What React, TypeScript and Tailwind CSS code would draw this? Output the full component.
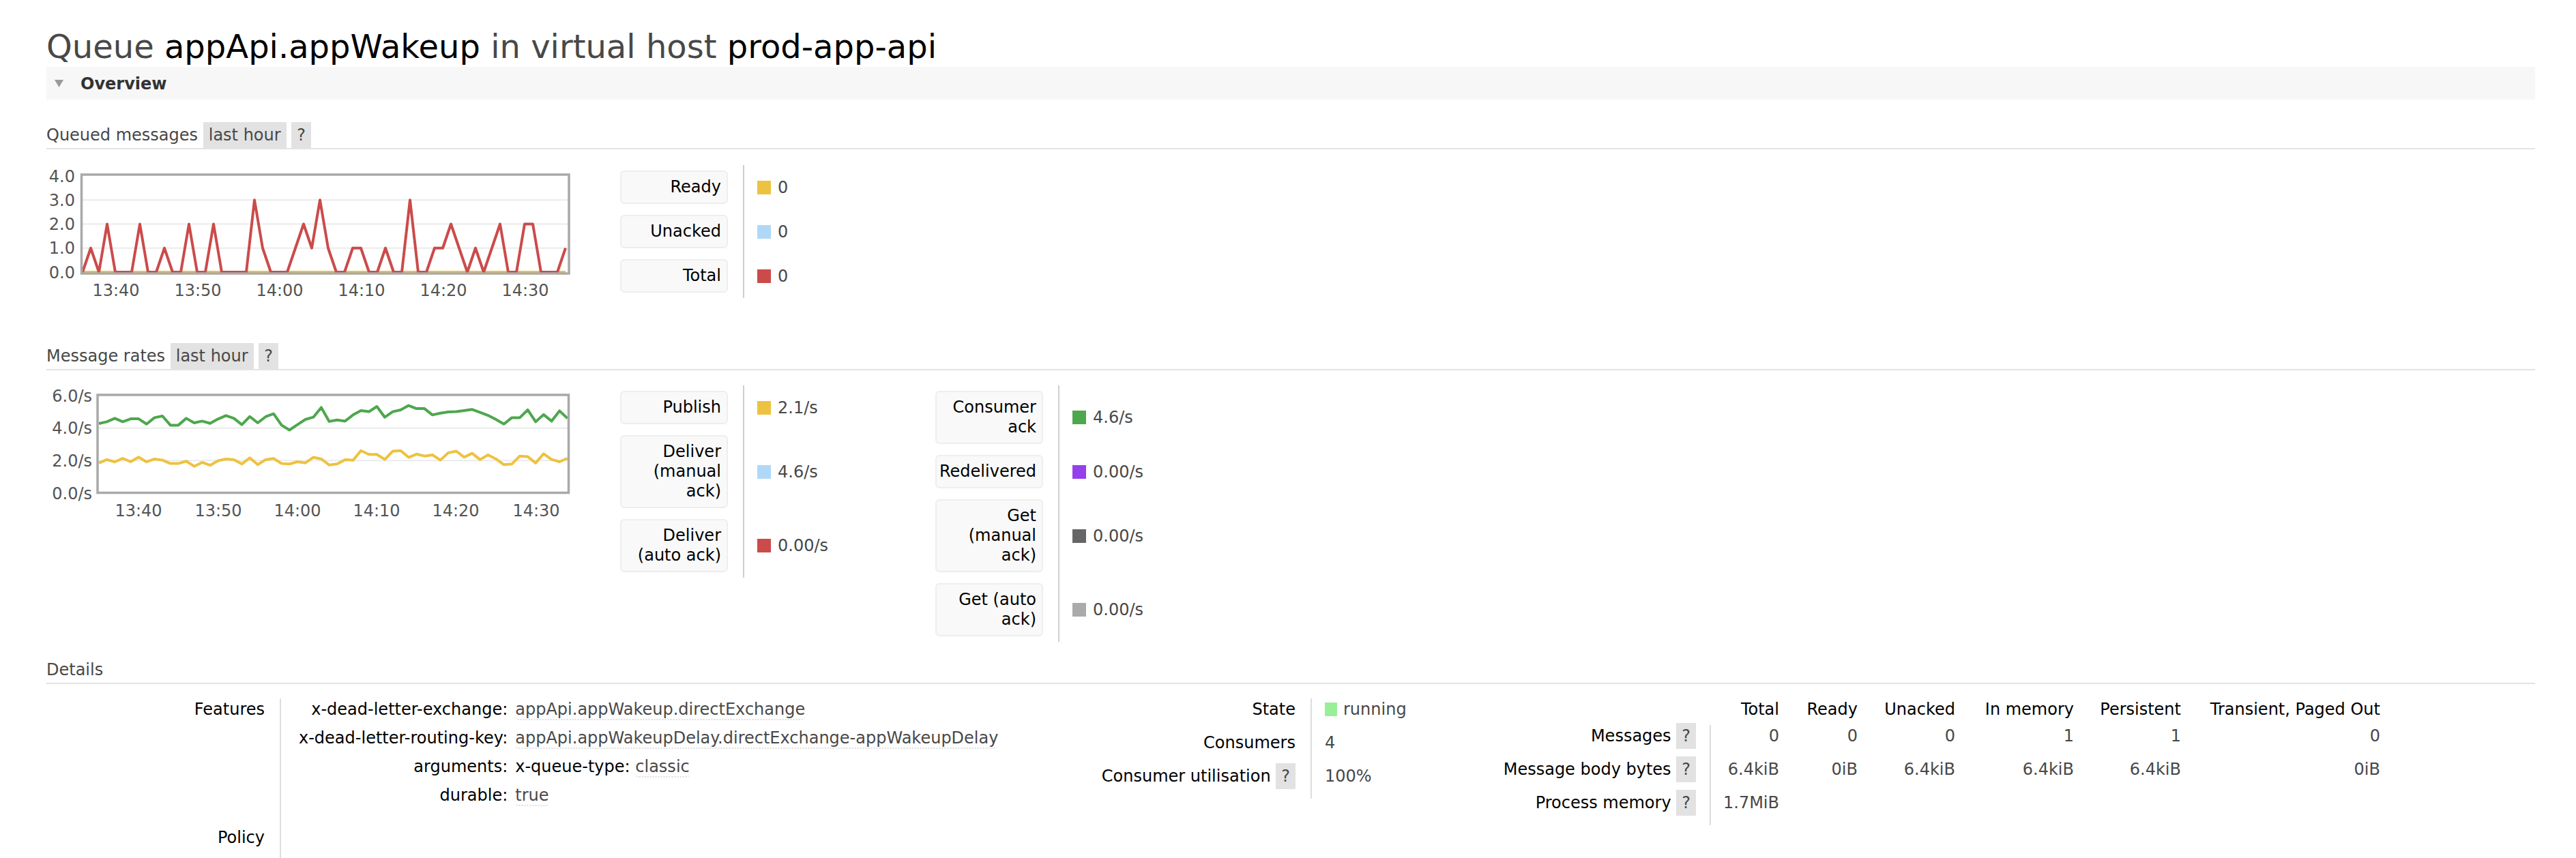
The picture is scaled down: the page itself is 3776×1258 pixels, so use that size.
import React from "react";

const queued = [
  0, 1, 0, 2, 0, 0, 0, 2, 0, 0, 1, 0, 0, 2, 0, 0, 2, 0, 0, 0, 0, 3, 1, 0, 0, 0,
  1, 2, 1, 3, 1, 0, 0, 1, 1, 0, 0, 1, 0, 0, 3, 0, 0, 1, 1, 2, 1, 0, 1, 0, 1, 2,
  0, 0, 2, 2, 0, 0, 0, 1,
];

const acks = [
  4.28, 4.39, 4.6, 4.39, 4.57, 4.57, 4.25, 4.64, 4.74, 4.18, 4.18, 4.6, 4.32,
  4.43, 4.29, 4.56, 4.77, 4.6, 4.21, 4.71, 4.32, 4.7, 4.88, 4.18, 3.88, 4.21,
  4.53, 4.67, 5.27, 4.41, 4.5, 4.43, 4.81, 5.08, 5.01, 5.33, 4.67, 5.01, 5.12,
  5.39, 5.2, 5.2, 4.81, 4.92, 4.99, 5.01, 5.08, 5.15, 4.97, 4.78, 4.53, 4.25,
  4.64, 4.64, 5.12, 4.39, 4.83, 4.43, 5.06, 4.6,
];

const publishes = [
  1.85, 2.06, 1.92, 2.14, 1.93, 2.21, 1.92, 2.1, 2.03, 1.82, 1.82, 1.96, 1.65,
  1.89, 1.71, 1.99, 2.1, 2.06, 1.79, 2.17, 1.75, 2.06, 2.13, 1.82, 1.79, 1.93,
  1.86, 2.2, 2.1, 1.73, 1.79, 2.06, 2.02, 2.61, 2.38, 2.38, 2.07, 2.58, 2.61,
  2.2, 2.4, 2.28, 2.35, 2.03, 2.48, 2.58, 2.21, 2.45, 2.06, 2.35, 2.1, 1.75,
  1.79, 2.28, 2.24, 1.85, 2.42, 2.07, 1.93, 2.14,
];

const zeros = queued.map(() => 0);

type Series = { color: string; data: number[] };

type ChartProps = {
  frame: [number, number, number, number]; // x1, y1, x2, y2 of the border
  zeroY: number;
  maxY: number;
  max: number;
  x0: number;
  step: number;
  grid: number[];
  yTicks: { v: number; label: string }[];
  yLabelX: number;
  xTicks: { x: number; label: string }[];
  series: Series[];
};

function FlotChart({
  frame,
  zeroY,
  maxY,
  max,
  x0,
  step,
  grid,
  yTicks,
  yLabelX,
  xTicks,
  series,
}: ChartProps) {
  const [x1, y1, x2, y2] = frame;
  const y = (v: number) => zeroY - (v * (zeroY - maxY)) / max;

  return (
    <svg width={772} height={203} className="shrink-0">
      {grid.map((g) => (
        <line
          key={g}
          x1={x1}
          x2={x2}
          y1={y(g)}
          y2={y(g)}
          stroke="#ebebeb"
          strokeWidth={2}
        />
      ))}
      {series.map((s, k) => (
        <polyline
          key={k}
          fill="none"
          stroke={s.color}
          strokeWidth={4}
          strokeLinejoin="round"
          points={s.data.map((v, i) => `${x0 + i * step},${y(v)}`).join(" ")}
        />
      ))}
      <rect
        x={x1}
        y={y1}
        width={x2 - x1}
        height={y2 - y1}
        fill="none"
        stroke="#a9a9a9"
        strokeWidth={3.5}
      />
      <g fontFamily="DejaVu Sans, sans-serif" fontSize={24} fill="#545454">
        {yTicks.map((t) => (
          <text key={t.label} x={yLabelX} y={y(t.v) + 8.5} textAnchor="end">
            {t.label}
          </text>
        ))}
        {xTicks.map((t) => (
          <text key={t.label} x={t.x} y={191.5} textAnchor="middle">
            {t.label}
          </text>
        ))}
      </g>
    </svg>
  );
}

function Help() {
  return <span className="bg-[#e2e2e2] px-[8px] py-[5px] text-[#484848]">?</span>;
}

function SectionTitle({ title, range = true }: { title: string; range?: boolean }) {
  return (
    <h3 className="border-b-2 border-[#e3e3e3] pt-[5px] pb-[5px] leading-[28px] text-[#484848]">
      {title}
      {range && (
        <>
          {" "}
          <span className="bg-[#e2e2e2] px-[8px] py-[5px]">last hour</span>{" "}
          <Help />
        </>
      )}
    </h3>
  );
}

function LegendRow({
  label,
  swatch,
  value,
  cellWidth = "w-[282px]",
}: {
  label: string;
  swatch: string;
  value: string;
  cellWidth?: string;
}) {
  return (
    <div className="flex">
      <div className="py-[8px] pr-[22px]">
        <div className="w-[158px] rounded-[6px] border-2 border-[#eeeeee] bg-[#f9f9f9] py-[8px] pr-[8px] text-right leading-[29px] text-black">
          {label}
        </div>
      </div>
      <div className={`flex items-center border-l-2 border-[#cfcfcf] pl-[19px] ${cellWidth}`}>
        <span className={`mr-[10px] h-[20px] w-[20px] ${swatch}`} />
        <span className="text-[#484848]">{value}</span>
      </div>
    </div>
  );
}

function Val({ children }: { children: React.ReactNode }) {
  return (
    <span className="rounded-[5px] border-b-2 border-dotted border-[#dddddd] text-[#484848]">
      {children}
    </span>
  );
}

const msgCols = ["Total", "Ready", "Unacked", "In memory", "Persistent", "Transient, Paged Out"];

const msgRows: { label: string; values: string[] }[] = [
  { label: "Messages", values: ["0", "0", "0", "1", "1", "0"] },
  { label: "Message body bytes", values: ["6.4kiB", "0iB", "6.4kiB", "6.4kiB", "6.4kiB", "0iB"] },
  { label: "Process memory", values: ["1.7MiB", "", "", "", "", ""] },
];

export default function App() {
  return (
    <div className="min-h-[1258px] w-[3776px] overflow-hidden bg-white pt-[40px] pr-[60px] pl-[68px] font-['DejaVu_Sans',sans-serif] text-[24px] leading-[28px] text-[#484848]">
      <h1 className="text-[48px] leading-[56px] font-normal text-[#484848]">
        Queue <span className="text-black">appApi.appWakeup</span> in virtual host{" "}
        <span className="text-black">prod-app-api</span>
      </h1>

      <div className="mt-[2px] flex h-[48px] items-center bg-[#f7f7f7] pl-[12px]">
        <svg width={13} height={11} className="mr-[25px]">
          <polygon points="0,0 13,0 6.5,11" fill="#9a9a9a" />
        </svg>
        <h2 className="pt-[2px] font-bold text-[#333333]">Overview</h2>
      </div>

      <div className="mt-[33px]">
        <SectionTitle title="Queued messages" />
      </div>

      <div className="mt-[23px] flex">
        <FlotChart
          frame={[51.5, 14, 766, 159]}
          zeroY={157}
          maxY={16}
          max={4}
          x0={53}
          step={12}
          grid={[1, 2, 3]}
          yLabelX={42}
          yTicks={[
            { v: 4, label: "4.0" },
            { v: 3, label: "3.0" },
            { v: 2, label: "2.0" },
            { v: 1, label: "1.0" },
            { v: 0, label: "0.0" },
          ]}
          xTicks={[
            { x: 102, label: "13:40" },
            { x: 222, label: "13:50" },
            { x: 342, label: "14:00" },
            { x: 462, label: "14:10" },
            { x: 582, label: "14:20" },
            { x: 702, label: "14:30" },
          ]}
          series={[
            { color: "#afd8f8", data: zeros },
            { color: "#edc240", data: zeros },
            { color: "#cb4b4b", data: queued },
          ]}
        />
        <div className="ml-[69px] flex flex-col">
          <LegendRow label="Ready" swatch="bg-[#edc240]" value="0" />
          <LegendRow label="Unacked" swatch="bg-[#afd8f8]" value="0" />
          <LegendRow label="Total" swatch="bg-[#cb4b4b]" value="0" />
        </div>
      </div>

      <div className="mt-[58px]">
        <SectionTitle title="Message rates" />
      </div>

      <div className="mt-[22px] flex items-start">
        <FlotChart
          frame={[75, 14, 765.5, 157.5]}
          zeroY={158}
          maxY={15}
          max={6}
          x0={77}
          step={11.64}
          grid={[2, 4]}
          yLabelX={67}
          yTicks={[
            { v: 6, label: "6.0/s" },
            { v: 4, label: "4.0/s" },
            { v: 2, label: "2.0/s" },
            { v: 0, label: "0.0/s" },
          ]}
          xTicks={[
            { x: 135, label: "13:40" },
            { x: 252, label: "13:50" },
            { x: 368, label: "14:00" },
            { x: 484, label: "14:10" },
            { x: 600, label: "14:20" },
            { x: 718, label: "14:30" },
          ]}
          series={[
            { color: "#edc240", data: publishes },
            { color: "#4da74d", data: acks },
          ]}
        />
        <div className="ml-[69px] flex flex-col">
          <LegendRow label="Publish" swatch="bg-[#edc240]" value="2.1/s" />
          <LegendRow label="Deliver (manual ack)" swatch="bg-[#afd8f8]" value="4.6/s" />
          <LegendRow label="Deliver (auto ack)" swatch="bg-[#cb4b4b]" value="0.00/s" />
        </div>
        <div className="flex flex-col">
          <LegendRow label="Consumer ack" swatch="bg-[#4da74d]" value="4.6/s" />
          <LegendRow label="Redelivered" swatch="bg-[#9440ed]" value="0.00/s" />
          <LegendRow label="Get (manual ack)" swatch="bg-[#666666]" value="0.00/s" />
          <LegendRow label="Get (auto ack)" swatch="bg-[#aaaaaa]" value="0.00/s" />
        </div>
      </div>

      <div className="mt-[22px]">
        <SectionTitle title="Details" range={false} />
      </div>

      <div className="mt-[21px] flex items-start">
        {/* features / policy */}
        <div className="grid w-[1522px] shrink-0 grid-cols-[342px_1fr]">
          <div className="pt-[2px] pr-[22px] text-right text-black">Features</div>
          <div className="border-l-2 border-[#dddddd] pt-[2px] pb-[18px] pl-[26px]">
            <div className="grid grid-cols-[auto_1fr] gap-x-[11px]">
              {[
                ["x-dead-letter-exchange:", <Val key="a">appApi.appWakeup.directExchange</Val>],
                [
                  "x-dead-letter-routing-key:",
                  <Val key="b">appApi.appWakeupDelay.directExchange-appWakeupDelay</Val>,
                ],
                [
                  "arguments:",
                  <span key="c" className="text-black">
                    x-queue-type: <Val>classic</Val>
                  </span>,
                ],
                ["durable:", <Val key="d">true</Val>],
              ].map(([k, v], i) => (
                <React.Fragment key={i}>
                  <div className="pb-[14px] text-right text-black">{k}</div>
                  <div className="pb-[14px]">{v}</div>
                </React.Fragment>
              ))}
            </div>
          </div>
          <div className="pt-[2px] pr-[22px] pb-[19px] text-right text-black">Policy</div>
          <div className="border-l-2 border-[#dddddd]" />
        </div>

        {/* state */}
        <div className="grid w-[600px] shrink-0 grid-cols-[331px_269px]">
          <div className="pt-[2px] pr-[22px] pb-[19px] text-right text-black">State</div>
          <div className="flex items-start border-l-2 border-[#dddddd] pt-[2px] pb-[19px] pl-[19px]">
            <span className="mt-[4px] mr-[9px] h-[20px] w-[18px] bg-[#98ef98]" />
            <span>running</span>
          </div>
          <div className="pt-[2px] pr-[22px] pb-[19px] text-right text-black">Consumers</div>
          <div className="border-l-2 border-[#dddddd] pt-[2px] pb-[19px] pl-[19px]">4</div>
          <div className="pt-[2px] pr-[22px] pb-[19px] text-right text-black">
            Consumer utilisation <Help />
          </div>
          <div className="border-l-2 border-[#dddddd] pt-[2px] pb-[19px] pl-[19px]">100%</div>
        </div>

        {/* message counts */}
        <div className="grid shrink-0 grid-cols-[316px_112px_115px_143px_174px_157px_292px]">
          <div />
          {msgCols.map((c) => (
            <div key={c} className="pt-[2px] pr-[10px] pb-[9px] text-right text-black">
              {c}
            </div>
          ))}
          {msgRows.map((r) => (
            <React.Fragment key={r.label}>
              <div className="pt-[2px] pr-[20px] pb-[19px] text-right text-black">
                {r.label} <Help />
              </div>
              {r.values.map((v, i) => (
                <div
                  key={i}
                  className={
                    i === 0
                      ? "border-l-2 border-[#dddddd] pt-[2px] pr-[10px] pb-[19px] text-right"
                      : "pt-[2px] pr-[10px] pb-[19px] text-right"
                  }
                >
                  {v}
                </div>
              ))}
            </React.Fragment>
          ))}
        </div>
      </div>
    </div>
  );
}
